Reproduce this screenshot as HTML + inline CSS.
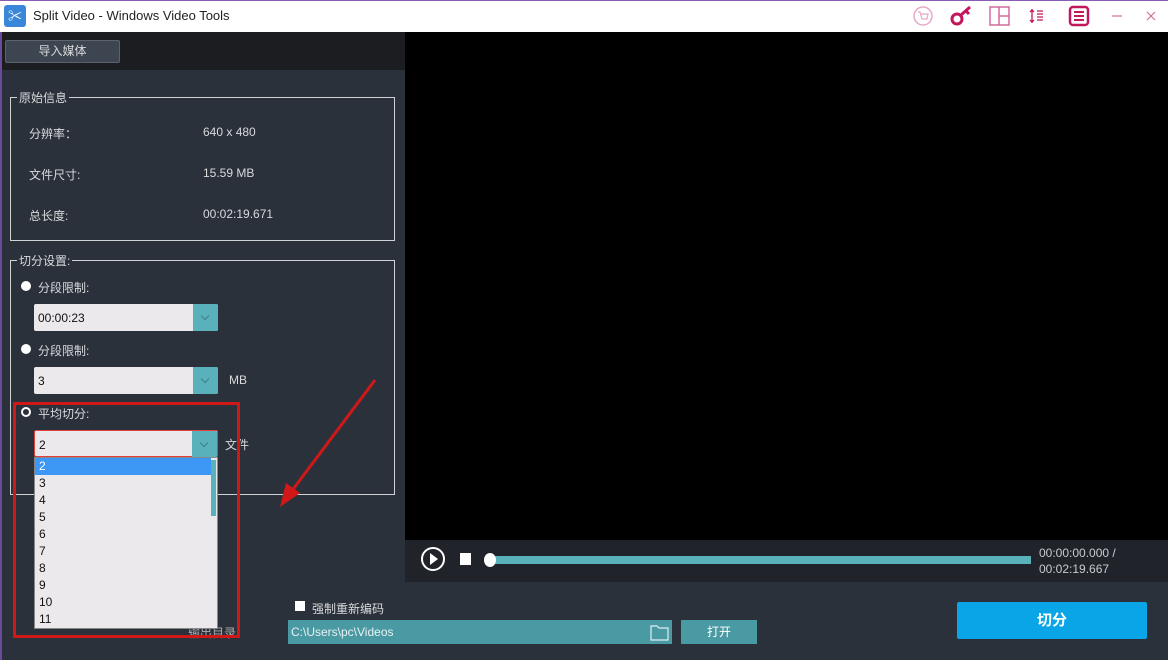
<!DOCTYPE html><html><head><meta charset="utf-8"><style>
*{margin:0;padding:0;box-sizing:border-box}
body{width:1168px;height:660px;overflow:hidden;background:#2b313a;font-family:"Liberation Sans","Noto Sans CJK SC",sans-serif;font-size:12px;color:#d8dadd;position:relative}
.a{position:absolute}
.fs{position:absolute;border:1px solid #d0d3d6}
.lg{position:absolute;background:#2b313a;padding:0 2px;top:-9px;left:6px;font-size:12px}
.cb{position:absolute;height:27px;background:#ebe9ec;border-radius:2px;color:#111;font-size:12px;padding:7px 4px}
.cb i{position:absolute;right:0;top:0;width:25px;height:27px;background:#58b1bb;border-radius:0 2px 2px 0}
.cb i:after{content:"";position:absolute;left:9px;top:9px;width:5px;height:5px;border-right:1px solid #3a7f88;border-bottom:1px solid #3a7f88;transform:rotate(45deg)}
.dot{position:absolute;width:10px;height:10px;border-radius:50%;background:#fff}
</style></head><body>
<div class="a" style="left:0;top:0;width:1168px;height:32px;background:#fff;border-top:1px solid #8a5cb0"></div>
<div class="a" style="left:4px;top:5px;width:22px;height:22px;background:#3a86d8;border-radius:3px;color:#fff;font-size:14px;text-align:center;line-height:22px">✂</div>
<div class="a" style="left:33px;top:8px;color:#222;font-size:13px">Split Video - Windows Video Tools</div>
<svg class="a" style="left:900px;top:0" width="268" height="32">
<circle cx="23" cy="16" r="9" fill="none" stroke="#e7a8c8" stroke-width="1.5"/><path d="M18 12h2l2 7h5l1-5h-7" fill="none" stroke="#e7a8c8" stroke-width="1.2"/>
<circle cx="57" cy="19" r="5" fill="none" stroke="#c2185b" stroke-width="3"/><path d="M61 15l9-8M66 11l3 3" stroke="#c2185b" stroke-width="3"/>
<rect x="90" y="7" width="19" height="18" fill="none" stroke="#d36a9c" stroke-width="1.5"/><path d="M99 7v18M99 16h10" stroke="#d36a9c" stroke-width="1.5"/>
<path d="M132 9v14M130 12l2-2 2 2M130 20l2 2 2-2M137 11h6M137 14h6M137 17h6M137 20h6" stroke="#c2185b" stroke-width="1.3" fill="none"/>
<rect x="170" y="7" width="18" height="18" rx="3" fill="none" stroke="#c2185b" stroke-width="2.5"/><path d="M174 12h10M174 16h10M174 20h10" stroke="#c2185b" stroke-width="2"/>
<path d="M212 16h10" stroke="#d36a9c" stroke-width="1.2"/><path d="M247 12l8 8M255 12l-8 8" stroke="#d36a9c" stroke-width="1.2"/>
</svg>
<div class="a" style="left:0;top:32px;width:405px;height:38px;background:#1b1d21"></div>
<div class="a" style="left:0;top:32px;width:2px;height:628px;background:#6a4a9a"></div>
<div class="a" style="left:5px;top:40px;width:115px;height:23px;background:#3d4550;border:1px solid #5b636d;border-radius:2px;text-align:center;line-height:21px;font-size:12px">导入媒体</div>
<div class="fs" style="left:10px;top:97px;width:385px;height:144px"><div class="lg">原始信息</div></div>
<div class="a" style="left:29px;top:125px">分辨率：</div><div class="a" style="left:203px;top:125px">640 x 480</div>
<div class="a" style="left:29px;top:166px">文件尺寸:</div><div class="a" style="left:203px;top:166px">15.59 MB</div>
<div class="a" style="left:29px;top:207px">总长度:</div><div class="a" style="left:203px;top:207px">00:02:19.671</div>
<div class="fs" style="left:10px;top:260px;width:385px;height:235px"><div class="lg">切分设置:</div></div>
<div class="dot" style="left:21px;top:281px"></div><div class="a" style="left:38px;top:279px">分段限制:</div>
<div class="cb" style="left:34px;top:304px;width:184px">00:00:23<i></i></div>
<div class="dot" style="left:21px;top:344px"></div><div class="a" style="left:38px;top:342px">分段限制:</div>
<div class="cb" style="left:34px;top:367px;width:184px">3<i></i></div><div class="a" style="left:229px;top:373px">MB</div>
<div class="a" style="left:21px;top:407px;width:10px;height:10px;border-radius:50%;border:2.5px solid #fff"></div><div class="a" style="left:38px;top:405px">平均切分:</div>
<div class="cb" style="left:34px;top:430px;width:184px;border:1px solid #e04040">2<i></i></div><div class="a" style="left:225px;top:436px">文件</div>
<div class="a" style="left:188px;top:624px;color:#aaa">输出目录</div>
<div class="a" style="left:34px;top:457px;width:184px;height:172px;background:#ebe9ec;border:1px solid #888;color:#111;font-size:12px;line-height:17px">
<div style="background:#3c97f5;color:#fff;padding-left:4px;width:176px">2</div>
<div style="padding-left:4px">3<br>4<br>5<br>6<br>7<br>8<br>9<br>10<br>11</div>
<div class="a" style="right:1px;top:2px;width:5px;height:56px;background:#58b1bb"></div></div>
<div class="a" style="left:13px;top:402px;width:227px;height:236px;border:3px solid #d01818"></div>
<svg class="a" style="left:270px;top:370px" width="120" height="150"><path d="M105 10L15 130" stroke="#d01818" stroke-width="3"/><path d="M10 137l6-24 14 10z" fill="#d01818"/></svg>
<div class="a" style="left:405px;top:32px;width:763px;height:508px;background:#000"></div>
<div class="a" style="left:405px;top:540px;width:763px;height:42px;background:#20232a"></div>
<div class="a" style="left:421px;top:547px;width:24px;height:24px;border:2px solid #fff;border-radius:50%"></div>
<div class="a" style="left:430px;top:553px;width:0;height:0;border-left:8px solid #fff;border-top:6px solid transparent;border-bottom:6px solid transparent"></div>
<div class="a" style="left:460px;top:553px;width:11px;height:12px;background:#fff"></div>
<div class="a" style="left:487px;top:556px;width:544px;height:8px;background:#58b1bb"></div>
<div class="a" style="left:484px;top:553px;width:12px;height:14px;background:#fff;border-radius:50%"></div>
<div class="a" style="left:1039px;top:545px;color:#c8ccd0;font-size:12px;line-height:16px">00:00:00.000 /<br>00:02:19.667</div>
<div class="a" style="left:295px;top:601px;width:10px;height:10px;background:#fff"></div><div class="a" style="left:312px;top:600px">强制重新编码</div>
<div class="a" style="left:288px;top:620px;width:384px;height:24px;background:#4a9aa3;color:#e8f0f2;padding:5px 3px;font-size:12px">C:\Users\pc\Videos</div>
<svg class="a" style="left:649px;top:622px" width="22" height="20"><path d="M2 4h6l2 2h9v12H2z" fill="none" stroke="#dfeff0" stroke-width="1.2"/></svg>
<div class="a" style="left:681px;top:620px;width:76px;height:24px;background:#4a9aa3;text-align:center;line-height:24px;color:#fff">打开</div>
<div class="a" style="left:957px;top:602px;width:190px;height:37px;background:#0aa5e6;border-radius:2px;text-align:center;line-height:37px;color:#fff;font-size:15px;font-weight:bold">切分</div>
</body></html>
